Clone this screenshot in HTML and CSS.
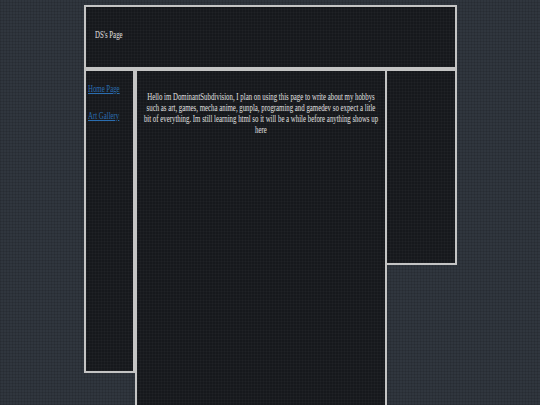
FILE: index.html
```html
<!DOCTYPE html>
<html>
<head>
<meta charset="utf-8">
<title>DS's Page</title>
<link rel="stylesheet" href="styles.css">
</head>
<body>
<div class="page">
  <header class="header"><span class="squash">DS's Page</span></header>
  <div class="row">
    <nav class="nav">
      <a class="squash link" href="#">Home Page</a>
      <a class="squash link" href="#">Art Gallery</a>
    </nav>
    <main class="main">
      <p class="intro">Hello im DominantSubdivision, I plan on using this page to write about my hobbys such as art, games, mecha anime, gunpla, programing and gamedev so expect a litle bit of everything. Im still learning html so it will be a while before anything shows up here</p>
    </main>
    <aside class="side"></aside>
  </div>
</div>
</body>
</html>
```

FILE: styles.css
```css
html, body {
  margin: 0;
  height: 100%;
  overflow: hidden;
}
body {
  background-color: #30363e;
  background-image:
    repeating-linear-gradient(0deg, rgba(0,0,0,0.10) 0 1px, transparent 1px 3px),
    repeating-linear-gradient(90deg, rgba(0,0,0,0.10) 0 1px, transparent 1px 3px);
  font-family: "Liberation Serif", "Times New Roman", serif;
  color: #e0e0e0;
}
.page {
  width: 373px;
  margin-left: 84px;
  padding-top: 5px;
}
.header, .nav, .main, .side {
  box-sizing: border-box;
  border: 2px solid #c4c4c4;
  background-color: #16181c;
  background-image:
    repeating-linear-gradient(0deg, rgba(255,255,255,0.025) 0 1px, transparent 1px 3px),
    repeating-linear-gradient(90deg, rgba(255,255,255,0.025) 0 1px, transparent 1px 3px);
}
.header {
  height: 64px;
  padding: 21px 0 0 9px;
  font-size: 11px;
}
.squash {
  display: inline-block;
  transform: scaleX(0.62);
  transform-origin: left center;
  white-space: nowrap;
}
.row {
  display: flex;
  align-items: flex-start;
}
.nav {
  width: 51px;
  height: 304px;
  padding: 11px 0 0 2px;
  display: flex;
  flex-direction: column;
  gap: 15px;
  font-size: 11px;
}
.link {
  color: #2a6db0;
  text-decoration: underline;
  line-height: 12px;
}
.main {
  width: 252px;
  height: 360px;
  display: flex;
  justify-content: center;
  padding-top: 20px;
}
.intro {
  flex: none;
  width: 362px;
  margin: 0;
  font-size: 10.5px;
  line-height: 11px;
  text-align: center;
  transform: scaleX(0.65);
  transform-origin: center top;
}
.side {
  width: 72px;
  height: 196px;
  margin-left: -2px;
}
```
